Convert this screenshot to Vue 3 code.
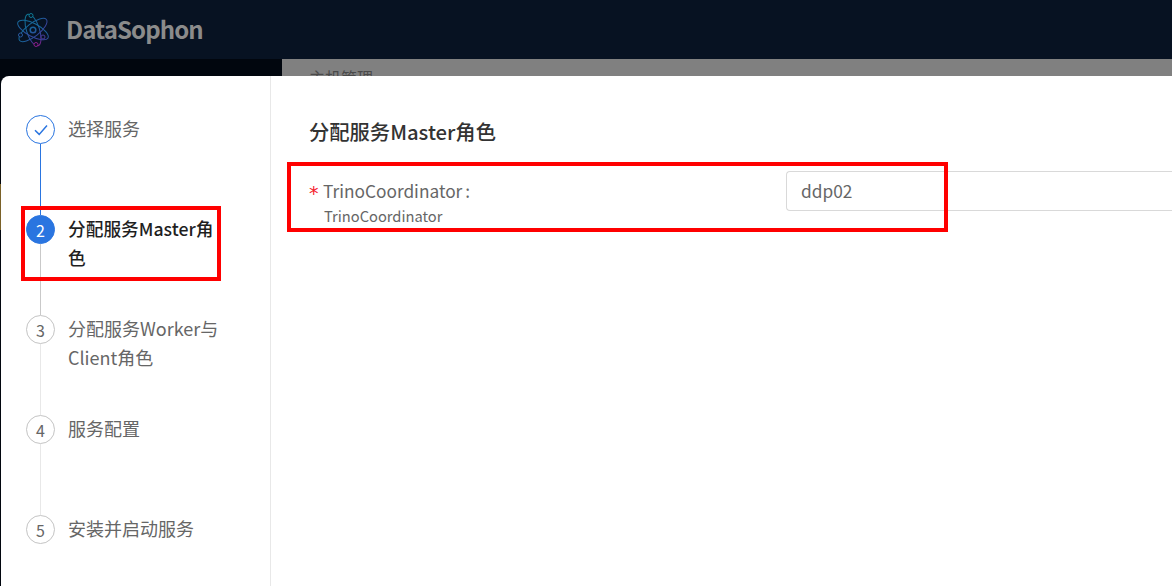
<script setup>
const steps = [
  { n: 1, text: '选择服务', state: 'done' },
  { n: 2, text: '分配服务Master角色', state: 'active' },
  { n: 3, text: '分配服务Worker与Client角色', state: 'wait' },
  { n: 4, text: '服务配置', state: 'wait' },
  { n: 5, text: '安装并启动服务', state: 'wait' },
]
</script>

<template>
  <div class="page">
    <header class="topbar">
      <svg class="logo" width="36" height="38" viewBox="0 0 36 38" fill="none">
        <defs>
          <linearGradient id="atom" gradientUnits="userSpaceOnUse" x1="12" y1="2" x2="22" y2="36">
            <stop offset="0" stop-color="#0c7a96" />
            <stop offset="0.5" stop-color="#1c5f9c" />
            <stop offset="0.75" stop-color="#3d3f9a" />
            <stop offset="1" stop-color="#8c1c88" />
          </linearGradient>
        </defs>
        <g stroke="url(#atom)" stroke-width="1">
          <ellipse cx="17" cy="19" rx="6.5" ry="16.5" transform="rotate(-18 17 19)" />
          <ellipse cx="17" cy="19" rx="17" ry="6.5" transform="rotate(28 17 19)" />
          <ellipse cx="17" cy="19" rx="17" ry="6.5" transform="rotate(-38 17 19)" />
          <circle cx="17" cy="19" r="2.8" stroke-width="1.5" />
        </g>
        <circle cx="15" cy="4.5" r="2" fill="#071222" stroke="#0c7a96" />
        <circle cx="4.5" cy="24" r="2" fill="#071222" stroke="#2a5aa0" />
        <circle cx="27" cy="26" r="2" fill="#071222" stroke="#4a3a9a" />
        <circle cx="20" cy="33.5" r="2" fill="#071222" stroke="#8c1c88" />
      </svg>
      <span class="brand">DataSophon</span>
    </header>
    <div class="under">
      <div class="sider"></div>
      <div class="content"><span class="crumb">主机管理</span></div>
    </div>

    <div class="modal">
      <aside class="stepper">
        <div v-for="s in steps" :key="s.n" class="step" :class="s.state">
          <div class="dot">
            <svg v-if="s.state === 'done'" width="14" height="12" viewBox="0 0 14 12" fill="none">
              <path d="M1 6.2 5.2 10.4 13 1.6" stroke="#2a75e0" stroke-width="1.5" />
            </svg>
            <template v-else>{{ s.n }}</template>
          </div>
          <div class="step-text">{{ s.text }}</div>
        </div>
      </aside>
      <section class="body">
        <h2 class="title">分配服务Master角色</h2>
        <div class="form-row">
          <div class="label-col">
            <div class="label"><span class="req">*</span><span>TrinoCoordinator</span><span class="colon">:</span></div>
            <div class="sublabel">TrinoCoordinator</div>
          </div>
          <div class="select">ddp02</div>
        </div>
      </section>
    </div>

    <div class="edge"></div>
    <div class="mark mark-step"></div>
    <div class="mark mark-form"></div>
  </div>
</template>

<style scoped>
.page {
  position: relative;
  width: 1172px;
  height: 586px;
  overflow: hidden;
  font-family: "Noto Sans CJK SC", "Noto Sans", sans-serif;
  background: #808080;
}
.topbar {
  height: 59px;
  display: flex;
  align-items: center;
  padding-left: 16px;
  gap: 14px;
  background: #071222;
}
.logo {
  flex: none;
}
.brand {
  margin-top: -3px;
  font-size: 24px;
  font-weight: 700;
  letter-spacing: -0.9px;
  color: #8b8b8b;
}
.under {
  display: flex;
  height: 527px;
}
.sider {
  width: 282px;
  background: #01060e;
}
.content {
  flex: 1;
  padding: 6px 0 0 27px;
  background: #808080;
}
.crumb {
  font-size: 16px;
  color: #4a4a4a;
}
.modal {
  position: absolute;
  left: 1px;
  top: 76px;
  right: 0;
  bottom: 0;
  display: flex;
  background: #fff;
  border-top-left-radius: 8px;
}
.stepper {
  width: 270px;
  box-sizing: border-box;
  flex: none;
  padding: 39px 0 0 25px;
  border-right: 1px solid #e8e8e8;
}
.step {
  position: relative;
  display: flex;
  height: 100px;
}
.step:not(:last-child)::after {
  content: '';
  position: absolute;
  left: 14px;
  top: 29px;
  bottom: 0;
  width: 1px;
  background: #e8e8e8;
}
.step.done::after {
  background: #2a75e0;
}
.step.active::after {
  background: #c9c9c9;
}
.dot {
  flex: none;
  box-sizing: border-box;
  width: 29px;
  height: 29px;
  display: flex;
  align-items: center;
  justify-content: center;
  border: 1px solid #c4c4c4;
  border-radius: 50%;
  font-size: 16px;
  color: #666;
  background: #fff;
  position: relative;
  z-index: 1;
}
.done .dot {
  border-color: #2a75e0;
}
.active .dot {
  border-color: #2a75e0;
  background: #2a75e0;
  color: #fff;
}
.step-text {
  width: 152px;
  margin-top: -1px;
  margin-left: 13px;
  font-size: 18px;
  line-height: 29px;
  color: #666;
}
.active .step-text {
  font-size: 17.7px;
  color: #1f1f1f;
  font-weight: 500;
}
.body {
  flex: 1;
  padding: 38px 0 0 38px;
}
.title {
  margin: 0;
  font-size: 20.3px;
  line-height: 34px;
  font-weight: 500;
  color: #333;
}
.form-row {
  display: flex;
  margin-top: 23px;
}
.label-col {
  width: 477px;
  flex: none;
}
.label {
  display: flex;
  align-items: center;
  height: 24px;
  margin-top: 8px;
  font-size: 17.3px;
  line-height: 24px;
  color: #666;
}
.req {
  flex: none;
  width: 14px;
  margin-top: 4px;
  color: #f5222d;
  font-family: "DejaVu Sans", sans-serif;
  font-size: 19px;
  line-height: 20px;
}
.colon {
  margin-left: 3px;
}
.sublabel {
  margin-top: 3px;
  margin-left: 15px;
  font-size: 14.7px;
  line-height: 20px;
  color: #666;
}
.select {
  flex: 1;
  height: 40px;
  box-sizing: border-box;
  padding-left: 14px;
  border: 1px solid #d9d9d9;
  border-radius: 4px 0 0 4px;
  border-right: 0;
  font-size: 17.3px;
  line-height: 37px;
  color: #666;
}
.edge {
  position: absolute;
  left: 0;
  top: 184px;
  width: 1px;
  height: 46px;
  background: #7a6128;
}
.mark {
  position: absolute;
  box-sizing: border-box;
  border: 4px solid #f00;
}
.mark-step {
  left: 21px;
  top: 206px;
  width: 200px;
  height: 75px;
}
.mark-form {
  left: 287px;
  top: 162px;
  width: 661px;
  height: 70px;
}
</style>

<style>
html, body { background: #808080; }
</style>
